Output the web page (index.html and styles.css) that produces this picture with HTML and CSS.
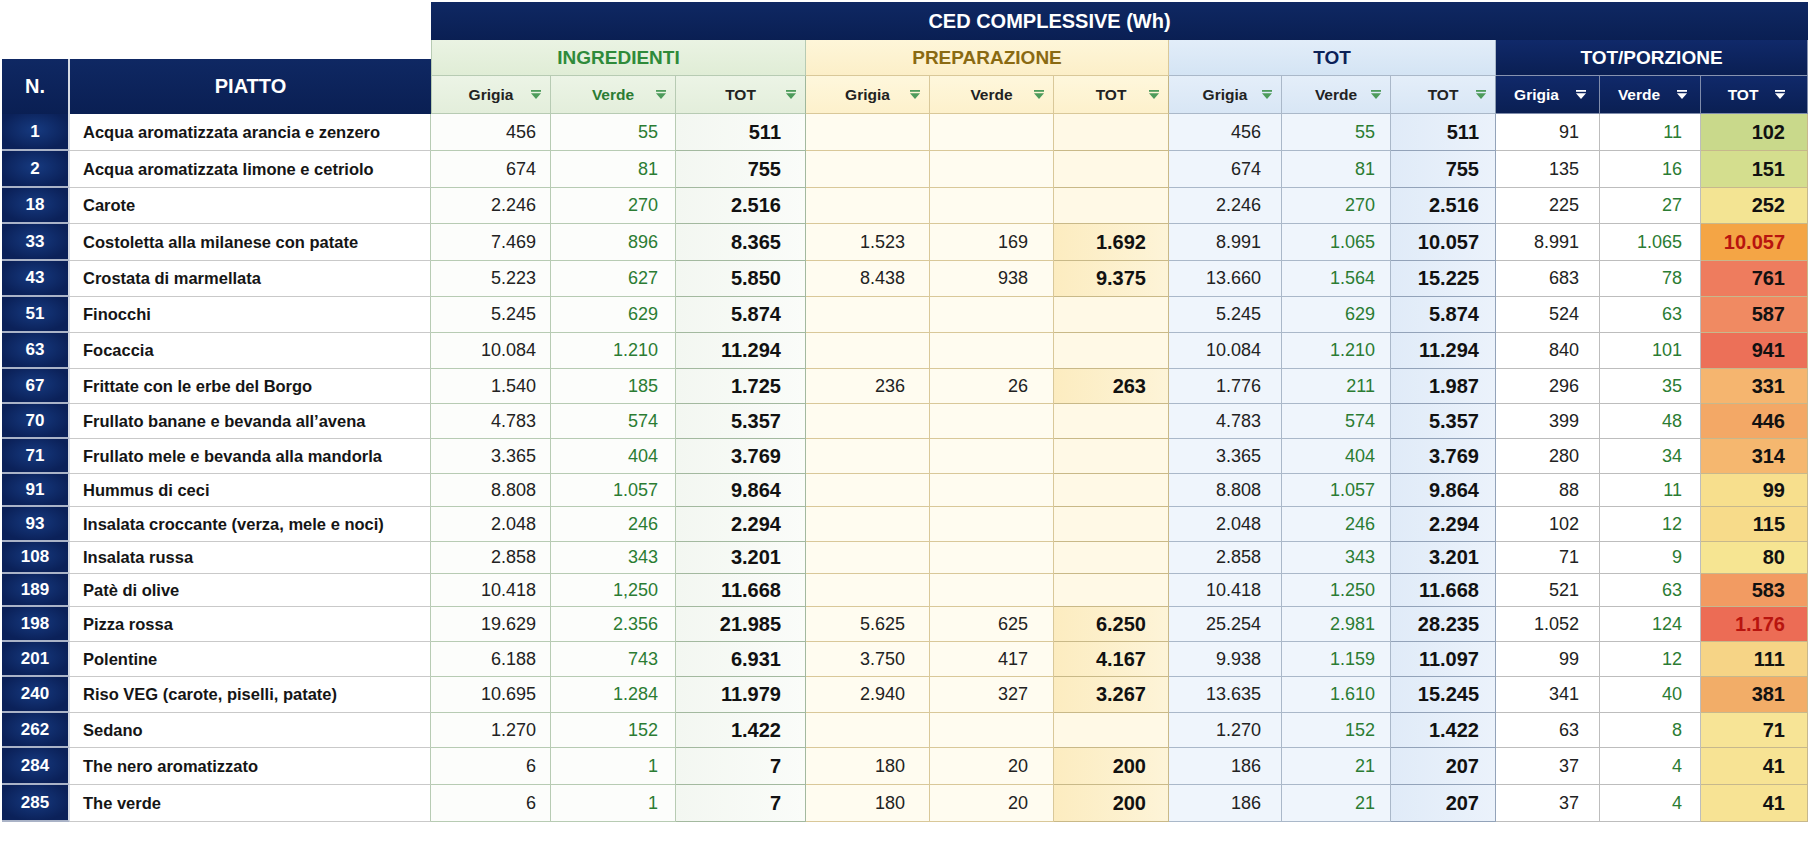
FILE: index.html
```html
<!DOCTYPE html>
<html lang="it">
<head>
<meta charset="utf-8">
<title>CED complessive</title>
<link rel="stylesheet" href="styles.css">
</head>
<body>
<div class="sheet">
  <div class="head">
    <div class="blank"></div>
    <div class="ced">CED COMPLESSIVE (Wh)</div>
    <div class="grp g-ing">INGREDIENTI</div>
    <div class="grp g-prep">PREPARAZIONE</div>
    <div class="grp g-tot">TOT</div>
    <div class="grp g-porz">TOT/PORZIONE</div>
    <div class="hn">N.</div>
    <div class="hp">PIATTO</div>
    <div class="sh s-ing s-first"><span>Grigia</span><svg class="flt" viewBox="0 0 12 9"><rect x="1" y="0" width="10" height="1.8"/><path d="M1 3.2h10L6 9z"/></svg></div>
    <div class="sh s-ing green"><span>Verde</span><svg class="flt" viewBox="0 0 12 9"><rect x="1" y="0" width="10" height="1.8"/><path d="M1 3.2h10L6 9z"/></svg></div>
    <div class="sh s-ing s-last-ing"><span>TOT</span><svg class="flt" viewBox="0 0 12 9"><rect x="1" y="0" width="10" height="1.8"/><path d="M1 3.2h10L6 9z"/></svg></div>
    <div class="sh s-prep"><span>Grigia</span><svg class="flt" viewBox="0 0 12 9"><rect x="1" y="0" width="10" height="1.8"/><path d="M1 3.2h10L6 9z"/></svg></div>
    <div class="sh s-prep"><span>Verde</span><svg class="flt" viewBox="0 0 12 9"><rect x="1" y="0" width="10" height="1.8"/><path d="M1 3.2h10L6 9z"/></svg></div>
    <div class="sh s-prep s-last-prep"><span>TOT</span><svg class="flt" viewBox="0 0 12 9"><rect x="1" y="0" width="10" height="1.8"/><path d="M1 3.2h10L6 9z"/></svg></div>
    <div class="sh s-tot"><span>Grigia</span><svg class="flt" viewBox="0 0 12 9"><rect x="1" y="0" width="10" height="1.8"/><path d="M1 3.2h10L6 9z"/></svg></div>
    <div class="sh s-tot"><span>Verde</span><svg class="flt" viewBox="0 0 12 9"><rect x="1" y="0" width="10" height="1.8"/><path d="M1 3.2h10L6 9z"/></svg></div>
    <div class="sh s-tot s-last-tot"><span>TOT</span><svg class="flt" viewBox="0 0 12 9"><rect x="1" y="0" width="10" height="1.8"/><path d="M1 3.2h10L6 9z"/></svg></div>
    <div class="sh s-porz"><span>Grigia</span><svg class="flt" viewBox="0 0 12 9"><rect x="1" y="0" width="10" height="1.8"/><path d="M1 3.2h10L6 9z"/></svg></div>
    <div class="sh s-porz"><span>Verde</span><svg class="flt" viewBox="0 0 12 9"><rect x="1" y="0" width="10" height="1.8"/><path d="M1 3.2h10L6 9z"/></svg></div>
    <div class="sh s-porz"><span>TOT</span><svg class="flt" viewBox="0 0 12 9"><rect x="1" y="0" width="10" height="1.8"/><path d="M1 3.2h10L6 9z"/></svg></div>
  </div>

  <div class="rows">
  <div class="row"><div class="n">1</div><div class="dish">Acqua aromatizzata arancia e zenzero</div><div class="c ig">456</div><div class="c iv">55</div><div class="c it">511</div><div class="c pg"></div><div class="c pv"></div><div class="c pt"></div><div class="c tg">456</div><div class="c tv">55</div><div class="c tt">511</div><div class="c qg">91</div><div class="c qv">11</div><div class="c qt" style="background:#c9d98b">102</div></div>
  <div class="row"><div class="n">2</div><div class="dish">Acqua aromatizzata limone e cetriolo</div><div class="c ig">674</div><div class="c iv">81</div><div class="c it">755</div><div class="c pg"></div><div class="c pv"></div><div class="c pt"></div><div class="c tg">674</div><div class="c tv">81</div><div class="c tt">755</div><div class="c qg">135</div><div class="c qv">16</div><div class="c qt" style="background:#d4de8e">151</div></div>
  <div class="row"><div class="n">18</div><div class="dish">Carote</div><div class="c ig">2.246</div><div class="c iv">270</div><div class="c it">2.516</div><div class="c pg"></div><div class="c pv"></div><div class="c pt"></div><div class="c tg">2.246</div><div class="c tv">270</div><div class="c tt">2.516</div><div class="c qg">225</div><div class="c qv">27</div><div class="c qt" style="background:#f3e493">252</div></div>
  <div class="row"><div class="n">33</div><div class="dish">Costoletta alla milanese con patate</div><div class="c ig">7.469</div><div class="c iv">896</div><div class="c it">8.365</div><div class="c pg">1.523</div><div class="c pv">169</div><div class="c pt on">1.692</div><div class="c tg">8.991</div><div class="c tv">1.065</div><div class="c tt">10.057</div><div class="c qg">8.991</div><div class="c qv">1.065</div><div class="c qt red" style="background:#f4a545">10.057</div></div>
  <div class="row"><div class="n">43</div><div class="dish">Crostata di marmellata</div><div class="c ig">5.223</div><div class="c iv">627</div><div class="c it">5.850</div><div class="c pg">8.438</div><div class="c pv">938</div><div class="c pt on">9.375</div><div class="c tg">13.660</div><div class="c tv">1.564</div><div class="c tt">15.225</div><div class="c qg">683</div><div class="c qv">78</div><div class="c qt" style="background:#ee7c5e">761</div></div>
  <div class="row"><div class="n">51</div><div class="dish">Finocchi</div><div class="c ig">5.245</div><div class="c iv">629</div><div class="c it">5.874</div><div class="c pg"></div><div class="c pv"></div><div class="c pt"></div><div class="c tg">5.245</div><div class="c tv">629</div><div class="c tt">5.874</div><div class="c qg">524</div><div class="c qv">63</div><div class="c qt" style="background:#f08a62">587</div></div>
  <div class="row"><div class="n">63</div><div class="dish">Focaccia</div><div class="c ig">10.084</div><div class="c iv">1.210</div><div class="c it">11.294</div><div class="c pg"></div><div class="c pv"></div><div class="c pt"></div><div class="c tg">10.084</div><div class="c tv">1.210</div><div class="c tt">11.294</div><div class="c qg">840</div><div class="c qv">101</div><div class="c qt" style="background:#ec7058">941</div></div>
  <div class="row"><div class="n">67</div><div class="dish">Frittate con le erbe del Borgo</div><div class="c ig">1.540</div><div class="c iv">185</div><div class="c it">1.725</div><div class="c pg">236</div><div class="c pv">26</div><div class="c pt on">263</div><div class="c tg">1.776</div><div class="c tv">211</div><div class="c tt">1.987</div><div class="c qg">296</div><div class="c qv">35</div><div class="c qt" style="background:#f5b56f">331</div></div>
  <div class="row"><div class="n">70</div><div class="dish">Frullato banane e bevanda all’avena</div><div class="c ig">4.783</div><div class="c iv">574</div><div class="c it">5.357</div><div class="c pg"></div><div class="c pv"></div><div class="c pt"></div><div class="c tg">4.783</div><div class="c tv">574</div><div class="c tt">5.357</div><div class="c qg">399</div><div class="c qv">48</div><div class="c qt" style="background:#f3a866">446</div></div>
  <div class="row"><div class="n">71</div><div class="dish">Frullato mele e bevanda alla mandorla</div><div class="c ig">3.365</div><div class="c iv">404</div><div class="c it">3.769</div><div class="c pg"></div><div class="c pv"></div><div class="c pt"></div><div class="c tg">3.365</div><div class="c tv">404</div><div class="c tt">3.769</div><div class="c qg">280</div><div class="c qv">34</div><div class="c qt" style="background:#f5b76f">314</div></div>
  <div class="row"><div class="n">91</div><div class="dish">Hummus di ceci</div><div class="c ig">8.808</div><div class="c iv">1.057</div><div class="c it">9.864</div><div class="c pg"></div><div class="c pv"></div><div class="c pt"></div><div class="c tg">8.808</div><div class="c tv">1.057</div><div class="c tt">9.864</div><div class="c qg">88</div><div class="c qv">11</div><div class="c qt" style="background:#f7df8d">99</div></div>
  <div class="row"><div class="n">93</div><div class="dish">Insalata croccante (verza, mele e noci)</div><div class="c ig">2.048</div><div class="c iv">246</div><div class="c it">2.294</div><div class="c pg"></div><div class="c pv"></div><div class="c pt"></div><div class="c tg">2.048</div><div class="c tv">246</div><div class="c tt">2.294</div><div class="c qg">102</div><div class="c qv">12</div><div class="c qt" style="background:#f7db8a">115</div></div>
  <div class="row"><div class="n">108</div><div class="dish">Insalata russa</div><div class="c ig">2.858</div><div class="c iv">343</div><div class="c it">3.201</div><div class="c pg"></div><div class="c pv"></div><div class="c pt"></div><div class="c tg">2.858</div><div class="c tv">343</div><div class="c tt">3.201</div><div class="c qg">71</div><div class="c qv">9</div><div class="c qt" style="background:#f6e592">80</div></div>
  <div class="row"><div class="n">189</div><div class="dish">Patè di olive</div><div class="c ig">10.418</div><div class="c iv">1,250</div><div class="c it">11.668</div><div class="c pg"></div><div class="c pv"></div><div class="c pt"></div><div class="c tg">10.418</div><div class="c tv">1.250</div><div class="c tt">11.668</div><div class="c qg">521</div><div class="c qv">63</div><div class="c qt" style="background:#f29b62">583</div></div>
  <div class="row"><div class="n">198</div><div class="dish">Pizza rossa</div><div class="c ig">19.629</div><div class="c iv">2.356</div><div class="c it">21.985</div><div class="c pg">5.625</div><div class="c pv">625</div><div class="c pt on">6.250</div><div class="c tg">25.254</div><div class="c tv">2.981</div><div class="c tt">28.235</div><div class="c qg">1.052</div><div class="c qv">124</div><div class="c qt red" style="background:#ec6c55">1.176</div></div>
  <div class="row"><div class="n">201</div><div class="dish">Polentine</div><div class="c ig">6.188</div><div class="c iv">743</div><div class="c it">6.931</div><div class="c pg">3.750</div><div class="c pv">417</div><div class="c pt on">4.167</div><div class="c tg">9.938</div><div class="c tv">1.159</div><div class="c tt">11.097</div><div class="c qg">99</div><div class="c qv">12</div><div class="c qt" style="background:#f6d486">111</div></div>
  <div class="row"><div class="n">240</div><div class="dish">Riso VEG (carote, piselli, patate)</div><div class="c ig">10.695</div><div class="c iv">1.284</div><div class="c it">11.979</div><div class="c pg">2.940</div><div class="c pv">327</div><div class="c pt on">3.267</div><div class="c tg">13.635</div><div class="c tv">1.610</div><div class="c tt">15.245</div><div class="c qg">341</div><div class="c qv">40</div><div class="c qt" style="background:#f2ad68">381</div></div>
  <div class="row"><div class="n">262</div><div class="dish">Sedano</div><div class="c ig">1.270</div><div class="c iv">152</div><div class="c it">1.422</div><div class="c pg"></div><div class="c pv"></div><div class="c pt"></div><div class="c tg">1.270</div><div class="c tv">152</div><div class="c tt">1.422</div><div class="c qg">63</div><div class="c qv">8</div><div class="c qt" style="background:#f7e496">71</div></div>
  <div class="row"><div class="n">284</div><div class="dish">The nero aromatizzato</div><div class="c ig">6</div><div class="c iv">1</div><div class="c it">7</div><div class="c pg">180</div><div class="c pv">20</div><div class="c pt on">200</div><div class="c tg">186</div><div class="c tv">21</div><div class="c tt">207</div><div class="c qg">37</div><div class="c qv">4</div><div class="c qt" style="background:#f7e394">41</div></div>
  <div class="row"><div class="n">285</div><div class="dish">The verde</div><div class="c ig">6</div><div class="c iv">1</div><div class="c it">7</div><div class="c pg">180</div><div class="c pv">20</div><div class="c pt on">200</div><div class="c tg">186</div><div class="c tv">21</div><div class="c tt">207</div><div class="c qg">37</div><div class="c qv">4</div><div class="c qt" style="background:#f7e394">41</div></div>
  </div>
</div>
</body>
</html>
```

FILE: styles.css
```css
:root {
  --cols: 68px 361px 120px 125px 130px 124px 124px 115px 113px 109px 105px 104px 101px 107px;
  --green: #2b7c33;
  --b-ing: #b7cbb3;
  --b-prep: #d9c899;
  --b-tot: #aab8c9;
  --b-porz: #bdbdbd;
  --b-row: #c9c9c9;
}

* { box-sizing: border-box; }

body {
  margin: 0;
  background: #ffffff;
  font-family: "Liberation Sans", Arial, sans-serif;
  color: #1e1e1e;
}

.sheet {
  display: flex;
  flex-direction: column;
  padding: 2px 0 0 2px;
  width: max-content;
}

/* ---------- header ---------- */
.head {
  display: grid;
  grid-template-columns: var(--cols);
  grid-template-rows: 38px 19px 17px 38px;
}

.blank { grid-column: 1 / 3; grid-row: 1 / 3; }

.ced {
  grid-column: 3 / 15;
  grid-row: 1;
  background: linear-gradient(180deg, #0f2863 0%, #0a1f53 100%);
  color: #fff;
  font-weight: bold;
  font-size: 20px;
  display: flex;
  align-items: center;
  justify-content: center;
  padding-right: 140px;
}

.grp {
  grid-row: 2 / 4;
  display: flex;
  align-items: center;
  justify-content: center;
  font-weight: bold;
  font-size: 19px;
  border-right: 1px solid;
  border-bottom: 1px solid;
}

.g-ing {
  grid-column: 3 / 6;
  background: linear-gradient(180deg, #eaf3e3, #e0edd6);
  color: #2f8a3a;
  border-color: var(--b-ing);
  border-left: 1px solid var(--b-ing);
}
.g-prep {
  grid-column: 6 / 9;
  background: linear-gradient(180deg, #fef6d9, #fcefc8);
  color: #8a6a12;
  border-color: var(--b-prep);
}
.g-tot {
  grid-column: 9 / 12;
  background: linear-gradient(180deg, #e2edf9, #d4e4f4);
  color: #0b2158;
  border-color: var(--b-tot);
}
.g-porz {
  grid-column: 12 / 15;
  background: linear-gradient(180deg, #10296a, #0a1f53);
  color: #fff;
  border-color: #8793b0;
}

.hn, .hp {
  grid-row: 3 / 5;
  background: linear-gradient(180deg, #0f2863 0%, #0a1f53 100%);
  color: #fff;
  font-weight: bold;
  font-size: 20px;
  display: flex;
  align-items: center;
  justify-content: center;
}
.hn { grid-column: 1; border-right: 2px solid #d6dbe4; }
.hp { grid-column: 2; }

.sh {
  grid-row: 4;
  display: flex;
  align-items: center;
  padding: 0 8px 0 20px;
  font-weight: bold;
  font-size: 15.5px;
  color: #222;
  border-right: 1px solid;
  border-bottom: 1px solid;
}
.sh span { flex: 1; text-align: center; }
.sh .flt { width: 12px; height: 9px; fill: #4d9b5b; flex: none; }

.s-ing { background: linear-gradient(180deg, #ecf4e6, #e3eedb); border-color: var(--b-ing); }
.s-first { border-left: 1px solid var(--b-ing); }
.s-ing.green { color: var(--green); }
.s-prep { background: linear-gradient(180deg, #fef7dc, #fdf1cc); border-color: var(--b-prep); }
.s-tot { background: linear-gradient(180deg, #e4eef9, #d8e6f5); border-color: var(--b-tot); }
.s-last-ing { border-right-color: #9fb79b; }
.s-last-prep { border-right-color: #c4b584; }
.s-last-tot { border-right-color: #8c9bb0; }
.s-porz {
  background: linear-gradient(180deg, #10296a, #0a1f53);
  color: #fff;
  border-color: #7f8cab;
  justify-content: center;
  gap: 16px;
  padding: 0 0 0 6px;
}
.s-porz span { flex: none; }
.s-porz .flt { fill: #ffffff; }

/* ---------- body rows ---------- */
.rows {
  display: grid;
  grid-template-rows: 37px 37px 36px 37px 36px 36px 36px 35px 35px 35px 33px 35px 32px 33px 35px 35px 36px 35px 37px 37px;
}

.row {
  display: grid;
  grid-template-columns: var(--cols);
}

.n {
  background: radial-gradient(ellipse at 50% 45%, #163a80 0%, #0b2159 75%);
  color: #fff;
  font-weight: bold;
  font-size: 17px;
  display: flex;
  align-items: center;
  justify-content: center;
  border-bottom: 2px solid #aab3c7;
  border-right: 2px solid #d6dbe4;
}

.dish {
  display: flex;
  align-items: center;
  padding-left: 13px;
  font-weight: bold;
  font-size: 16.5px;
  color: #151515;
  white-space: nowrap;
  border-bottom: 1px solid var(--b-row);
  border-right: 1px solid var(--b-ing);
}

.c {
  display: flex;
  align-items: center;
  justify-content: flex-end;
  padding-right: 15px;
  font-size: 18px;
  color: #222;
  border-right: 1px solid;
  border-bottom: 1px solid;
}

.ig, .iv { background: #fcfdfb; border-color: var(--b-ing); }
.it { background: linear-gradient(90deg, #f3f7f1, #fafcf9); border-color: #a3b99f; }
.iv { color: var(--green); }
.ig { padding-right: 14px; }
.iv { padding-right: 17px; }
.it { padding-right: 24px; }

.pg, .pv { background: #fffcf0; border-color: var(--b-prep); }
.pt { background: #fff9e6; border-color: #c9b988; }
.pt.on { background: linear-gradient(90deg, #fcecc0, #fdf4d8); }
.pg { padding-right: 24px; }
.pv { padding-right: 25px; }
.pt { padding-right: 22px; }

.tg, .tv { background: #eff5fc; border-color: var(--b-tot); }
.tv { color: var(--green); }
.tt { background: linear-gradient(90deg, #e0ebf8, #ebf2fb); border-color: #93a3b9; }
.tg { padding-right: 20px; }
.tv { padding-right: 15px; }
.tt { padding-right: 16px; }

.qg, .qv { background: #ffffff; border-color: var(--b-porz); }
.qv { color: var(--green); }
.qt { border-color: #c7b88c; }
.qg { padding-right: 20px; }
.qv { padding-right: 18px; }
.qt { padding-right: 22px; }

.it, .pt, .tt, .qt {
  font-weight: bold;
  font-size: 20px;
  color: #111;
}

.qt.red { color: #b8140f; }
```
